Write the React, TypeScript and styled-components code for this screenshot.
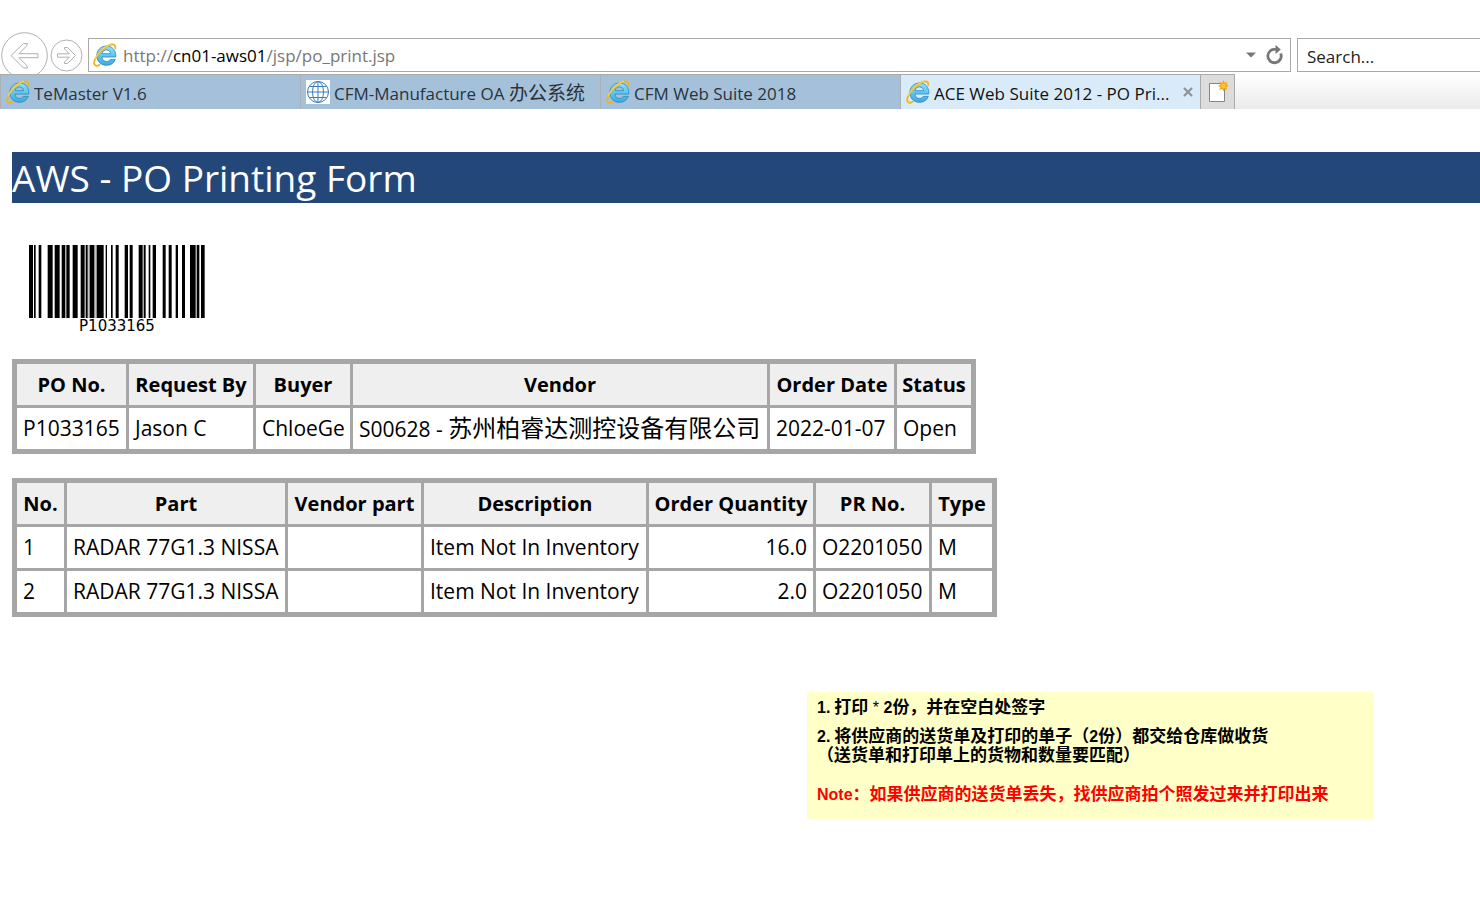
import React from "react";
import styled, { createGlobalStyle } from "styled-components";

const GlobalStyle = createGlobalStyle`
  * { box-sizing: border-box; }
  body {
    margin: 0;
    background: #fff;
    color: #000;
    font-family: "Open Sans", "Noto Sans CJK SC", sans-serif;
    overflow-x: hidden;
  }
  button, input { font: inherit; color: inherit; }
`;

const uiFont = `"Open Sans", "Noto Sans CJK SC", sans-serif`;

const Toolbar = styled.header`
  display: flex;
  align-items: center;
  height: 74px;
  padding-top: 36px;
`;

const NavButtons = styled.nav`
  display: flex;
  align-items: center;
  width: 88px;
  flex: none;
`;

const NavButton = styled.button<{ $size: number }>`
  display: block;
  width: ${(p) => p.$size}px;
  height: ${(p) => p.$size}px;
  margin: 0 1px;
  padding: 0;
  border: 0;
  background: none;
  svg { display: block; }
`;

const AddressBar = styled.div`
  display: flex;
  align-items: center;
  flex: 1;
  min-width: 0;
  height: 34px;
  padding: 0 5px 0 4px;
  border: 1px solid #aaa;
`;

const Address = styled.div`
  flex: 1;
  min-width: 0;
  margin-left: 6px;
  padding-top: 2px;
  color: #777;
  font: 17px/24px ${uiFont};
  white-space: nowrap;
  outline: 0;
  b { color: #000; font-weight: 400; }
`;

const IconButton = styled.button`
  display: flex;
  flex: none;
  align-items: center;
  justify-content: center;
  width: 20px;
  height: 24px;
  padding: 0;
  border: 0;
  background: none;
  & + & { margin-left: 4px; }
`;

const SearchBox = styled.input`
  flex: none;
  width: 183px;
  height: 34px;
  margin-left: 6px;
  padding: 2px 9px 0;
  border: 1px solid #aaa;
  border-right: 0;
  border-radius: 0;
  background: #fff;
  font: 17px/24px ${uiFont};
  &::placeholder { color: #222; opacity: 1; }
`;

const TabStrip = styled.div`
  display: flex;
  height: 35px;
  background: linear-gradient(#fff, #ebebeb);
`;

const Tab = styled.div<{ $active?: boolean }>`
  display: flex;
  align-items: center;
  flex: 0 1 300px;
  min-width: 0;
  padding: 0 2px 0 5px;
  border-top: 1px solid #aaa;
  border-left: 1px solid #aab0b6;
  background: ${(p) => (p.$active ? "#d9ebf9" : "#a5c1da")};
  color: ${(p) => (p.$active ? "#111" : "#2b333a")};
`;

const TabLabel = styled.button`
  display: flex;
  align-items: center;
  flex: 1;
  min-width: 0;
  height: 34px;
  padding: 0;
  border: 0;
  background: none;
  font: 17px/24px ${uiFont};
  white-space: nowrap;
  svg { flex: none; margin-right: 4px; }
`;

const TabText = styled.span`
  padding-top: 3px;
`;

const Han = styled.span`
  font-size: 19px;
`;

const NewTab = styled.button`
  display: flex;
  flex: none;
  align-items: center;
  justify-content: center;
  width: 35px;
  padding: 0;
  border: 1px solid #aaa;
  border-bottom: 0;
  background: #dcdcdc;
`;

const Page = styled.main`
  padding: 43px 0 40px 12px;
`;

const Title = styled.h1`
  margin: 0;
  background: #244779;
  color: #fff;
  font-size: 37px;
  font-weight: 400;
  line-height: 51px;
`;

const Barcode = styled.figure`
  width: 176px;
  margin: 42px 0 26px 17px;
  svg { display: block; }
  figcaption {
    padding-top: 1px;
    font: 15px/14px "DejaVu Sans", sans-serif;
    text-align: center;
  }
`;

const DataTable = styled.table`
  table-layout: fixed;
  width: ${(p) => p.width}px;
  margin-bottom: 24px;
  border: 2px solid #a6a6a6;
  border-spacing: 3px;
  background: #a6a6a6;
  font-size: 21px;
  line-height: 29px;
  white-space: nowrap;
`;

const Head = styled.th`
  height: 41px;
  padding: 0;
  background: #efefef;
  font-size: 20px;
  font-weight: 700;
`;

const Cell = styled.td<{ $numeric?: boolean }>`
  height: 41px;
  padding: 0 6px;
  background: #fff;
  text-align: ${(p) => (p.$numeric ? "right" : "left")};
`;

const VendorName = styled.span`
  font-size: 24px;
`;

const Note = styled.aside`
  width: 567px;
  min-height: 128px;
  margin: 75px 106px 0 auto;
  padding: 6px 10px;
  background: #ffffc8;
  font: 700 17px/19px "Liberation Sans", "Noto Sans CJK SC", sans-serif;
`;

const NoteLine = styled.p<{ $alert?: boolean }>`
  margin: 0 0 ${(p) => (p.$alert ? 0 : 10)}px;
  padding-top: ${(p) => (p.$alert ? 10 : 0)}px;
  color: ${(p) => (p.$alert ? "#f00" : "#000")};
`;

const Latin = styled.span<{ $light?: boolean }>`
  font-size: 16px;
  font-weight: ${(p) => (p.$light ? 400 : 700)};
`;

const Step = styled(Latin)`
  margin-right: 4px;
`;

function BrowserIcon() {
  return (
    <svg width="24" height="24" viewBox="0 0 24 24" aria-hidden="true">
      <defs>
        <linearGradient id="e-blue" x1="0" y1="0" x2="0" y2="1">
          <stop offset="0" stopColor="#8fe0fa" />
          <stop offset="0.5" stopColor="#5cc9f3" />
          <stop offset="1" stopColor="#3aa9e0" />
        </linearGradient>
      </defs>
      <path
        fill="url(#e-blue)"
        stroke="#2b86bf"
        strokeWidth="0.8"
        fillRule="evenodd"
        d="M22.800 14H8.900c.2 2.900 2 4.400 4.600 4.400 1.800 0 3-.7 3.700-2h5.100c-1.300 3.700-4.600 5.900-8.800 5.900-5.600 0-9.700-4-9.700-9.600s4.100-9.700 9.700-9.700c5.800 0 9.700 4.200 9.300 11zM9 10.700h8.600c-.2-2.400-1.900-3.800-4.200-3.800S9.300 8.300 9 10.700z"
      />
      <path
        fill="none"
        stroke="#f2b41c"
        strokeWidth="1.800"
        strokeLinecap="round"
        d="M22.300 5.300C22.600 2.300 21 .9 18 1.500 12 2.700 4.900 9.600 2.100 16.200.5 20 .9 22.300 2.900 22.700c1.100.2 2.400-.2 3.700-1"
      />
      <path fill="none" stroke="#ffe27a" strokeWidth="0.8" d="M18 1.400C12 2.800 4.800 9.700 1.900 16.200" />
    </svg>
  );
}

function GlobeIcon() {
  return (
    <svg width="24" height="24" viewBox="0 0 24 24" aria-hidden="true">
      <rect width="24" height="24" fill="#fff" />
      <g fill="none" stroke="#3b7cbc" strokeWidth="1">
        <circle cx="12" cy="12" r="10.500" />
        <ellipse cx="12" cy="12" rx="5.500" ry="10.500" />
        <path d="M12 1.500v21M1.500 12h21M3.500 6.500h17M3.500 17.500h17" />
      </g>
    </svg>
  );
}

const bars: [number, number][] = [
  [28, 40], [43, 48], [57, 65], [84, 99], [105, 120], [126, 137], [140, 150],
  [159, 174], [183, 195], [198, 204], [210, 224], [231, 252], [258, 262],
  [274, 279], [288, 297], [315, 325], [330, 339], [357, 369], [372, 378],
  [387, 392], [399, 409], [429, 438], [447, 456], [468, 475], [487, 496],
  [511, 528], [531, 539], [544, 555],
];

const orderColumns: [string, number][] = [
  ["PO No.", 109], ["Request By", 124], ["Buyer", 94],
  ["Vendor", 414], ["Order Date", 124], ["Status", 74],
];

const itemColumns: [string, number][] = [
  ["No.", 47], ["Part", 218], ["Vendor part", 133], ["Description", 222],
  ["Order Quantity", 164], ["PR No.", 113], ["Type", 60],
];

const items = [
  ["1", "RADAR 77G1.3 NISSA", "", "Item Not In Inventory", "16.0", "O2201050", "M"],
  ["2", "RADAR 77G1.3 NISSA", "", "Item Not In Inventory", "2.0", "O2201050", "M"],
];

function Columns({ columns }: { columns: [string, number][] }) {
  return (
    <>
      <colgroup>
        {columns.map(([name, width]) => <col key={name} width={width} />)}
      </colgroup>
      <thead>
        <tr>{columns.map(([name]) => <Head key={name} scope="col">{name}</Head>)}</tr>
      </thead>
    </>
  );
}

export default function App() {
  return (
    <>
      <GlobalStyle />
      <Toolbar>
        <NavButtons aria-label="History">
          <NavButton $size={47} aria-label="Back">
            <svg width="47" height="47" viewBox="0 0 47 47" fill="#fff" stroke="#b0b0b0">
              <circle cx="23.500" cy="23.500" r="22.800" />
              <path d="M10 23.500 22.500 11.500h4l-1 2.500-7.500 7.700H37v4H18l7.500 7.600 1 2.700h-4z" />
            </svg>
          </NavButton>
          <NavButton $size={33} aria-label="Forward">
            <svg width="33" height="33" viewBox="0 0 33 33" fill="#fff" stroke="#b0b0b0">
              <circle cx="16.500" cy="16.500" r="15.500" />
              <path d="M25.500 16.500 17.500 8.500h-3v1.500l4.800 4.800H7.500v3.400h11.800L14.500 23v1.500h3z" />
            </svg>
          </NavButton>
        </NavButtons>
        <AddressBar>
          <BrowserIcon />
          <Address role="textbox" aria-label="Address" contentEditable suppressContentEditableWarning spellCheck={false}>
            http://<b>cn01-aws01</b>/jsp/po_print.jsp
          </Address>
          <IconButton aria-label="Show addresses">
            <svg width="10" height="6" viewBox="0 0 10 6"><path d="M0 .5h10L5 5.500z" fill="#777" /></svg>
          </IconButton>
          <IconButton aria-label="Refresh">
            <svg width="18" height="20" viewBox="0 0 18 20">
              <path d="M14.700 8.500A6.700 6.700 0 1 1 10 4.500" fill="none" stroke="#777" strokeWidth="2.800" />
              <path d="M9.500 0 14.800 4.600 9.500 9z" fill="#777" />
            </svg>
          </IconButton>
        </AddressBar>
        <SearchBox type="text" aria-label="Search" placeholder="Search..." />
      </Toolbar>
      <TabStrip>
        <Tab><TabLabel><BrowserIcon /><TabText>TeMaster V1.6</TabText></TabLabel></Tab>
        <Tab><TabLabel><GlobeIcon /><TabText>CFM-Manufacture OA <Han>办公系统</Han></TabText></TabLabel></Tab>
        <Tab><TabLabel><BrowserIcon /><TabText>CFM Web Suite 2018</TabText></TabLabel></Tab>
        <Tab $active>
          <TabLabel><BrowserIcon /><TabText>ACE Web Suite 2012 - PO Pri...</TabText></TabLabel>
          <IconButton aria-label="Close tab">
            <svg width="10" height="10" viewBox="0 0 10 10"><path d="m1 1 8 8M9 1 1 9" stroke="#8b9399" strokeWidth="2.200" /></svg>
          </IconButton>
        </Tab>
        <NewTab aria-label="New tab">
          <svg width="22" height="24" viewBox="0 0 22 24">
            <path d="M2.500 3.500h15v18h-15z" fill="#fff" stroke="#858585" />
            <path d="M16.500 0l1.300 2.900L20.700 1.700l-1.200 2.900 2.500 1.300-2.800 1.200 1.100 2.900-2.700-1.100-1.300 2.700-1.200-2.700-2.900 1.100 1.200-2.900L11 5.900l2.500-1.300-1.100-2.900 2.800 1.200z" fill="#f9a21b" />
            <circle cx="16.500" cy="5.900" r="2.300" fill="#ffc52e" />
          </svg>
        </NewTab>
      </TabStrip>
      <Page>
        <Title>AWS - PO Printing Form</Title>
        <Barcode>
          <svg width="176" height="73" viewBox="28 0 528 219" role="img" aria-label="Barcode P1033165">
            <path d="M204 0h6v219h-6zM224 0h7v219h-7z" fill="#c4c4c4" />
            {bars.map(([from, to]) => <rect key={from} x={from} width={to - from} height="219" />)}
          </svg>
          <figcaption>P1033165</figcaption>
        </Barcode>
        <DataTable width={964}>
          <Columns columns={orderColumns} />
          <tbody>
            <tr>
              <Cell>P1033165</Cell>
              <Cell>Jason C</Cell>
              <Cell>ChloeGe</Cell>
              <Cell>S00628 - <VendorName>苏州柏睿达测控设备有限公司</VendorName></Cell>
              <Cell>2022-01-07</Cell>
              <Cell>Open</Cell>
            </tr>
          </tbody>
        </DataTable>
        <DataTable width={985}>
          <Columns columns={itemColumns} />
          <tbody>
            {items.map((row) => (
              <tr key={row[0]}>
                {row.map((value, i) => <Cell key={i} $numeric={i === 4}>{value}</Cell>)}
              </tr>
            ))}
          </tbody>
        </DataTable>
        <Note>
          <NoteLine>
            <Step>1.</Step>打印<Latin $light> * </Latin><Latin>2</Latin>份，并在空白处签字
          </NoteLine>
          <NoteLine>
            <Step>2.</Step>将供应商的送货单及打印的单子（<Latin>2</Latin>份）都交给仓库做收货
            <br />
            （送货单和打印单上的货物和数量要匹配）
          </NoteLine>
          <NoteLine $alert>
            <Latin>Note</Latin>：如果供应商的送货单丢失，找供应商拍个照发过来并打印出来
          </NoteLine>
        </Note>
      </Page>
    </>
  );
}
